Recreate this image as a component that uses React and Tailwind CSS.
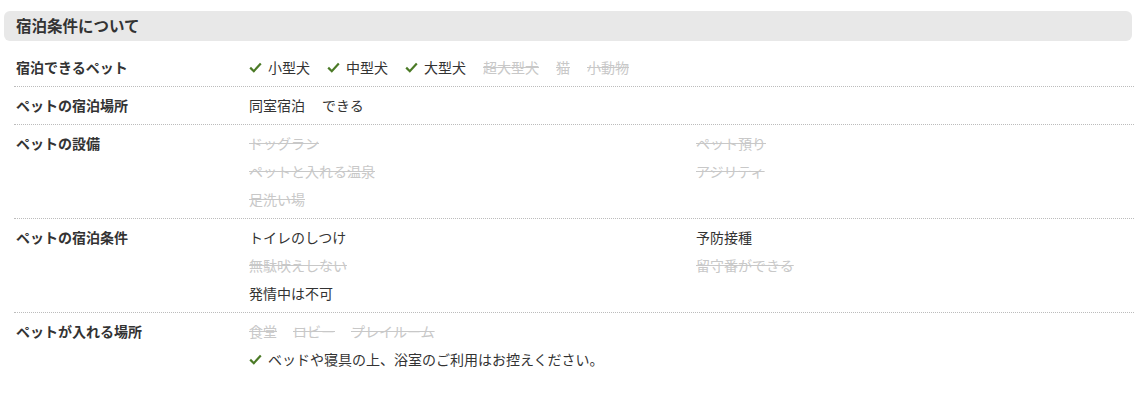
import React from "react";

const rows = [
  {
    label: "宿泊できるペット",
    inline: [
      { text: "小型犬", ok: true },
      { text: "中型犬", ok: true },
      { text: "大型犬", ok: true },
      { text: "超大型犬" },
      { text: "猫" },
      { text: "小動物" },
    ],
  },
  {
    label: "ペットの宿泊場所",
    inline: [
      { text: "同室宿泊", plain: true },
      { text: "できる", plain: true },
    ],
  },
  {
    label: "ペットの設備",
    grid: [
      { text: "ドッグラン" },
      { text: "ペット預り" },
      { text: "ペットと入れる温泉" },
      { text: "アジリティ" },
      { text: "足洗い場" },
    ],
  },
  {
    label: "ペットの宿泊条件",
    grid: [
      { text: "トイレのしつけ", plain: true },
      { text: "予防接種", plain: true },
      { text: "無駄吠えしない" },
      { text: "留守番ができる" },
      { text: "発情中は不可", plain: true },
    ],
  },
];

function Check() {
  return (
    <svg width="13" height="11" viewBox="0 0 13 11" className="shrink-0">
      <path d="M1.2 5.6 L4.8 9.2 L11.8 1.6" fill="none" stroke="#4b7a26" strokeWidth="2.2" />
    </svg>
  );
}

function Item({ it }) {
  if (it.ok) {
    return (
      <span className="flex items-center gap-[6px] text-[#333]">
        <Check />
        {it.text}
      </span>
    );
  }
  if (it.plain) return <span className="text-[#333]">{it.text}</span>;
  return <span className="text-[#c8c8c8] line-through decoration-[#c8c8c8]">{it.text}</span>;
}

function Row({ label, children, last }) {
  return (
    <div className={`flex pt-[4px] pb-[5px] ${last ? "" : "border-b border-dotted border-[#bcbcbc]"}`}>
      <div className="w-[235px] shrink-0 pl-[2px] text-[14px] leading-[28px] font-bold text-[#333]">{label}</div>
      <div className="flex-1 text-[14px] leading-[28px]">{children}</div>
    </div>
  );
}

export default function App() {
  return (
    <div className="w-[1146px] h-[396px] bg-white pt-[11px] pl-[4px]" style={{ fontFamily: '"Noto Sans CJK JP", "Noto Sans", sans-serif' }}>
      <div className="w-[1128px] h-[30px] rounded-[6px] bg-[#e8e8e8] pl-[12px] flex items-center">
        <h2 className="text-[15.5px] font-bold text-[#333]">宿泊条件について</h2>
      </div>
      <div className="ml-[10px] w-[1120px] mt-[8px]">
        {rows.map((r) => (
          <Row key={r.label} label={r.label}>
            {r.inline && (
              <div className="flex items-center gap-[17px]">
                {r.inline.map((it) => (
                  <Item key={it.text} it={it} />
                ))}
              </div>
            )}
            {r.grid && (
              <div className="grid grid-cols-[447px_1fr]">
                {r.grid.map((it) => (
                  <Item key={it.text} it={it} />
                ))}
              </div>
            )}
          </Row>
        ))}
        <Row label="ペットが入れる場所" last>
          <div className="flex items-center gap-[16px]">
            <Item it={{ text: "食堂" }} />
            <Item it={{ text: "ロビー" }} />
            <Item it={{ text: "プレイルーム" }} />
          </div>
          <Item it={{ text: "ベッドや寝具の上、浴室のご利用はお控えください。", ok: true }} />
        </Row>
      </div>
    </div>
  );
}
